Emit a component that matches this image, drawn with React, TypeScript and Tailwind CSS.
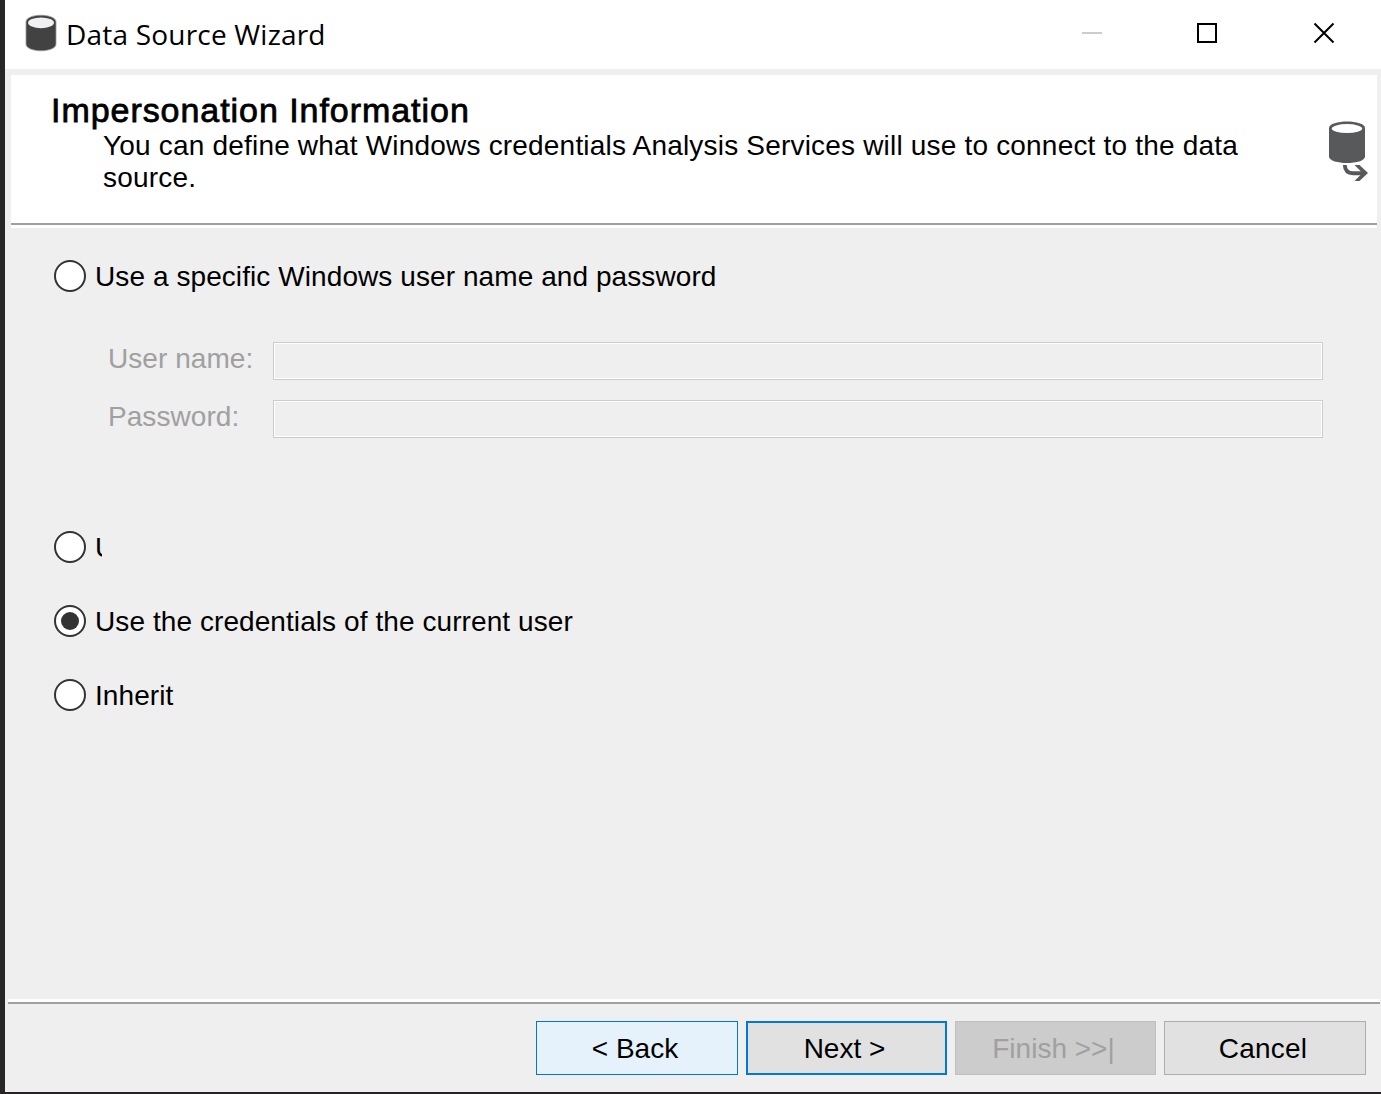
import React from "react";

function TitleBar() {
  return (
    <header className="flex h-[69px] items-start bg-white">
      <svg className="ml-5 mt-[14px] h-[38px] w-8 shrink-0" viewBox="0 0 32 38">
        <path d="M1 8C1 -1 31 -1 31 8V30C31 39 1 39 1 30Z" fill="#424242" stroke="#9b9b9b" strokeWidth=".8" />
        <ellipse cx="16" cy="8.8" rx="13" ry="5.4" fill="#f0f0f2" />
      </svg>
      <h1 className="ml-[9px] mt-[14px] whitespace-nowrap font-['Open_Sans','Noto_Sans',sans-serif] text-[28px] leading-10 tracking-[0.2px] text-black">
        Data Source Wizard
      </h1>
      <div className="ml-auto mr-[46px] mt-[22px] flex">
        <button aria-label="Minimize" className="mr-[95px] flex h-[22px] w-5 items-center">
          <span className="h-[2px] w-5 bg-[#cccccc]" />
        </button>
        <button aria-label="Maximize" className="mr-[96px] mt-px h-5 w-5 border-2 border-black" />
        <button aria-label="Close" className="h-[22px] w-[22px]">
          <svg className="h-[22px] w-[22px]" viewBox="0 0 22 22">
            <path d="M1.5 1.5L20.5 20.5M20.5 1.5L1.5 20.5" stroke="#000" strokeWidth="2" />
          </svg>
        </button>
      </div>
    </header>
  );
}

function Banner() {
  return (
    <section className="ml-[6px] mr-1 mt-[6px] flex h-[153px] flex-col bg-white">
      <div className="flex h-[148px] justify-between">
        <div className="ml-10 mt-[17px]">
          <h2 className="h-[38px] whitespace-nowrap text-[34px] leading-9 tracking-[0.95px] [-webkit-text-stroke:0.8px_black]">
            Impersonation Information
          </h2>
          <p className="ml-[52px] whitespace-nowrap tracking-[0.19px] leading-8">
            You can define what Windows credentials Analysis Services will use to connect to the data
            <br />
            source.
          </p>
        </div>
        <svg className="mr-[9px] mt-[45px] h-[63px] w-10 shrink-0" viewBox="0 0 40 63">
          <path d="M1 8C1 -.7 37 -.7 37 8V36.5C37 45.2 1 45.2 1 36.5Z" fill="#58595b" />
          <ellipse cx="19" cy="8.6" rx="15.2" ry="4.5" fill="#fff" />
          <path d="M16.8 45C17 50 19.8 53.2 25 53.2H37" fill="none" stroke="#58595b" strokeWidth="3.9" />
          <path d="M26.5 45H31.5L40 53L31.5 61H26.5L34.5 53Z" fill="#58595b" />
        </svg>
      </div>
      <div className="h-[2px] bg-[#a0a0a0]" />
    </section>
  );
}

function Radio({ label, checked = false, clipped = false }: { label: string; checked?: boolean; clipped?: boolean }) {
  return (
    <label className="flex h-8 items-center tracking-[0.08px]">
      <span className="flex h-8 w-8 shrink-0 items-center justify-center rounded-full border-2 border-[#333333] bg-white">
        {checked && <span className="h-[18px] w-[18px] rounded-full bg-[#333333]" />}
      </span>
      <span className={clipped ? "ml-[9px] mt-[2px] w-[7px] overflow-hidden whitespace-nowrap" : "ml-[9px] mt-[2px] whitespace-nowrap"}>
        {label}
      </span>
    </label>
  );
}

function Field({ label, type }: { label: string; type: string }) {
  return (
    <label className="flex h-[38px] items-center tracking-[0.06px] text-[#a0a0a0]">
      <span className="-mt-[5px] w-[165px] whitespace-nowrap">{label}</span>
      <input
        type={type}
        disabled
        className="h-[38px] w-[1050px] border border-[#cccccc] bg-[#efefef] shadow-[inset_0_0_0_1px_white]"
      />
    </label>
  );
}

function Footer() {
  return (
    <footer className="h-[93px]">
      <div className="ml-[3px] mr-px h-[5px] border-b-2 border-[#a0a0a0] bg-white" />
      <div className="ml-[531px] mt-[17px] flex h-[54px] gap-2">
        <button className="w-[202px] border border-[#0078d7] bg-[#e5f1fb] pr-1 pt-[2px]">&lt; Back</button>
        <button className="w-[201px] border-2 border-[#0078d7] bg-[#e1e1e1] pr-1 pt-[2px]">Next &gt;</button>
        <button disabled className="w-[201px] border border-[#bfbfbf] bg-[#cccccc] pr-1 pt-[2px] text-[#a0a0a0]">
          Finish &gt;&gt;|
        </button>
        <button className="w-[202px] border border-[#adadad] bg-[#e1e1e1] pr-1 pt-[2px] tracking-[0.2px]">Cancel</button>
      </div>
    </footer>
  );
}

export default function App() {
  return (
    <main className="flex h-[1094px] w-[1381px] flex-col overflow-hidden border-b-2 border-l-[5px] border-b-[#252326] border-l-[#272729] bg-[#efefef] font-['Liberation_Sans',Arial,sans-serif] text-[28px] leading-8 text-black">
      <TitleBar />
      <Banner />
      <section className="flex-1 pl-[49px] pt-8">
        <Radio label="Use a specific Windows user name and password" />
        <div className="ml-[54px] mt-[50px] flex flex-col gap-5">
          <Field label="User name:" type="text" />
          <Field label="Password:" type="password" />
        </div>
        <div className="mt-[93px] flex flex-col gap-[42px]">
          <Radio label="U" clipped />
          <Radio label="Use the credentials of the current user" checked />
          <Radio label="Inherit" />
        </div>
      </section>
      <Footer />
    </main>
  );
}
